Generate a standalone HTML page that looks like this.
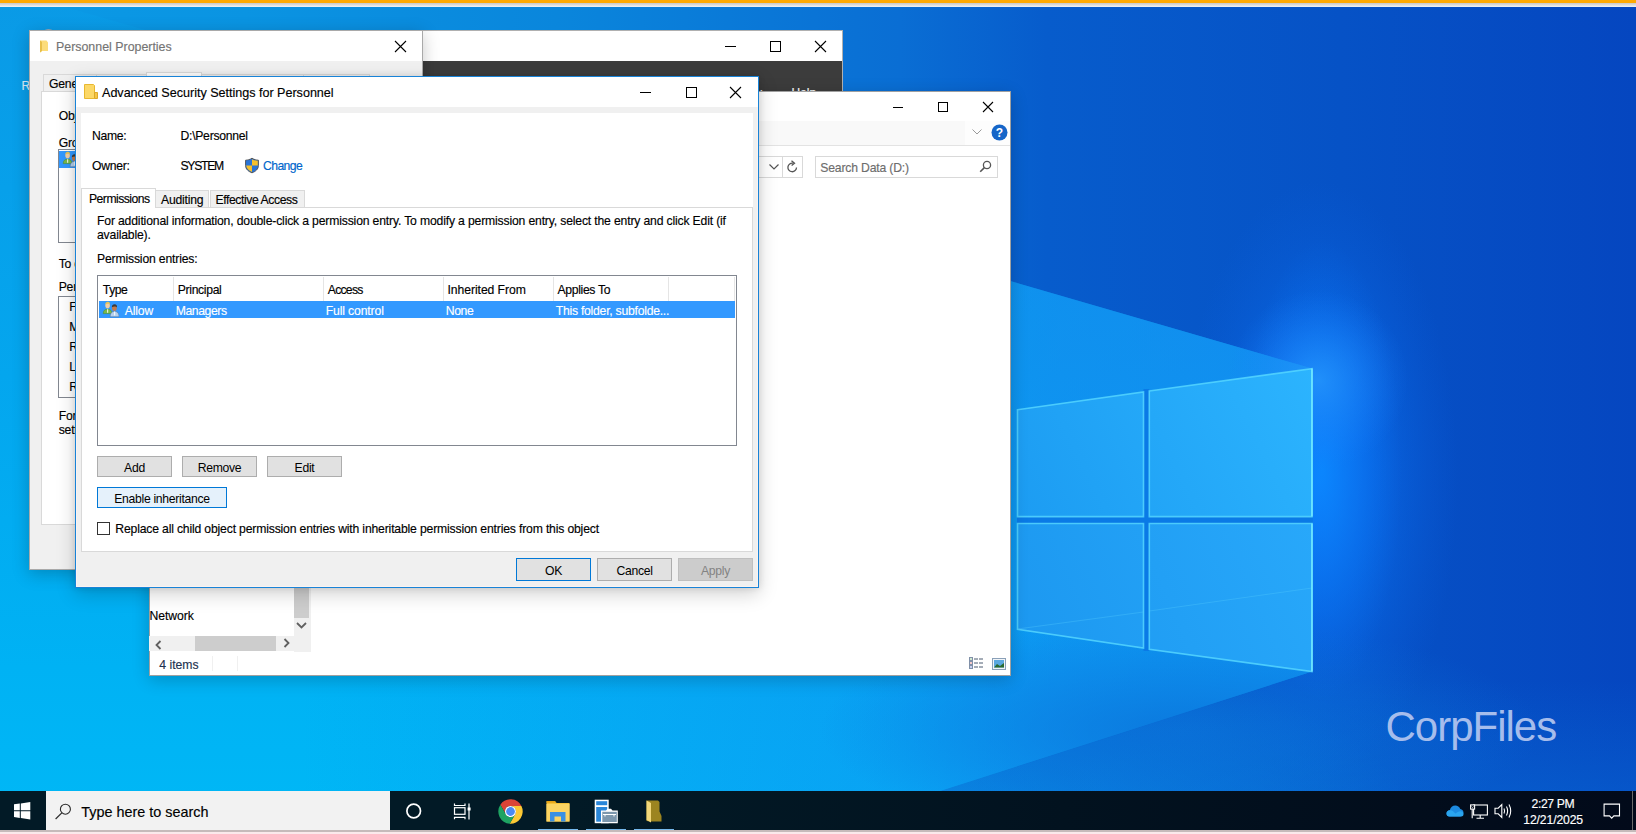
<!DOCTYPE html>
<html><head><meta charset="utf-8">
<style>
*{margin:0;padding:0;box-sizing:border-box}
html,body{width:1636px;height:834px;overflow:hidden;position:relative;background:#0a78d8;font-family:"Liberation Sans",sans-serif;color:#000}
.a{position:absolute}
.t{position:absolute;white-space:nowrap;line-height:1;-webkit-text-stroke:0.15px currentColor}
.win{position:absolute;background:#f0f0f0}
.btn{position:absolute;background:#e1e1e1;border:1px solid #adadad;font-size:12.2px;letter-spacing:-0.3px;display:flex;align-items:center;justify-content:center;white-space:nowrap;line-height:1;padding-top:3px}
</style></head><body>

<!-- desktop wallpaper -->
<svg class="a" style="left:0;top:0" width="1636" height="834" viewBox="0 0 1636 834">
<defs>
<linearGradient id="bg" x1="0" y1="0" x2="1636" y2="0" gradientUnits="userSpaceOnUse">
<stop offset="0" stop-color="#0a9ae6"/>
<stop offset="0.15" stop-color="#0a94e2"/>
<stop offset="0.34" stop-color="#0a86dc"/>
<stop offset="0.55" stop-color="#0a6ed4"/>
<stop offset="0.64" stop-color="#075ccc"/>
<stop offset="0.82" stop-color="#0652c6"/>
<stop offset="1" stop-color="#0546c0"/>
</linearGradient>
<linearGradient id="beam" x1="0" y1="0" x2="0" y2="834" gradientUnits="userSpaceOnUse">
<stop offset="0" stop-color="#0a9ae6"/>
<stop offset="0.45" stop-color="#04a6ee"/>
<stop offset="0.8" stop-color="#00b2f4"/>
<stop offset="1" stop-color="#00b8f6"/>
</linearGradient>
<linearGradient id="beamR" x1="300" y1="0" x2="1314" y2="0" gradientUnits="userSpaceOnUse">
<stop offset="0" stop-color="#1a7ef0" stop-opacity="0"/>
<stop offset="0.6" stop-color="#1a7ef0" stop-opacity="0.35"/>
<stop offset="0.75" stop-color="#1a7ef0" stop-opacity="0.5"/>
<stop offset="1" stop-color="#1a7ef0" stop-opacity="0.6"/>
</linearGradient>
<radialGradient id="glow" cx="0.5" cy="0.5" r="0.5">
<stop offset="0" stop-color="#1284ff" stop-opacity="0.9"/>
<stop offset="0.45" stop-color="#0a70f0" stop-opacity="0.55"/>
<stop offset="1" stop-color="#0a60e0" stop-opacity="0"/>
</radialGradient>
<radialGradient id="glow2" cx="1318" cy="380" r="90" gradientUnits="userSpaceOnUse">
<stop offset="0" stop-color="#2a9cff" stop-opacity="0.7"/>
<stop offset="1" stop-color="#1a80ff" stop-opacity="0"/>
</radialGradient>
<radialGradient id="glow3" cx="0.5" cy="0.5" r="0.5">
<stop offset="0" stop-color="#0a88ff" stop-opacity="0.8"/>
<stop offset="0.6" stop-color="#0a78f8" stop-opacity="0.35"/>
<stop offset="1" stop-color="#0a70f0" stop-opacity="0"/>
</radialGradient>
<radialGradient id="glowB" cx="0.5" cy="0.5" r="0.5">
<stop offset="0" stop-color="#0a96ea" stop-opacity="0.85"/>
<stop offset="1" stop-color="#0a90e6" stop-opacity="0"/>
</radialGradient>
<radialGradient id="under" cx="0.5" cy="0.5" r="0.5">
<stop offset="0" stop-color="#0a70d8" stop-opacity="0.75"/>
<stop offset="1" stop-color="#0a70d8" stop-opacity="0"/>
</radialGradient>
<linearGradient id="glowB2" x1="0" y1="680" x2="0" y2="834" gradientUnits="userSpaceOnUse">
<stop offset="0" stop-color="#0a84e4" stop-opacity="0"/>
<stop offset="1" stop-color="#0a84e4" stop-opacity="0.35"/>
</linearGradient>
<linearGradient id="paneT" x1="1017" y1="517" x2="1314" y2="368" gradientUnits="userSpaceOnUse">
<stop offset="0" stop-color="#1c9cf2"/>
<stop offset="1" stop-color="#2cb4fe"/>
</linearGradient>
<linearGradient id="paneB" x1="1017" y1="650" x2="1314" y2="523" gradientUnits="userSpaceOnUse">
<stop offset="0" stop-color="#1c98f0"/>
<stop offset="1" stop-color="#28a8fa"/>
</linearGradient>
</defs>
<rect x="0" y="0" width="1636" height="834" fill="url(#bg)"/>
<ellipse cx="1318" cy="480" rx="140" ry="300" fill="url(#glow)"/>
<ellipse cx="950" cy="840" rx="470" ry="200" fill="url(#glowB)"/>
<ellipse cx="1322" cy="470" rx="80" ry="230" fill="url(#glow3)"/>
<polygon points="1312,368.6 -200,-70 -200,900 600,900 1312,671.6" fill="url(#beam)"/>
<polygon points="1312,368.6 -200,-70 -200,900 600,900 1312,671.6" fill="url(#beamR)"/>
<ellipse cx="1180" cy="730" rx="360" ry="110" fill="url(#under)"/>
<polygon points="1314,672 1636,560 1636,834 600,900" fill="url(#glowB2)"/>
<rect x="1143.5" y="389" width="5.8" height="262" fill="#0a7ae6"/><rect x="1017" y="516.6" width="296" height="6.9" fill="#0a7ae6"/>
<rect x="1150" y="250" width="340" height="300" fill="url(#glow2)"/>
<!-- logo panes -->
<g stroke="#58d8ff" stroke-width="1.6" stroke-opacity="0.8">
<polygon points="1017.5,409.7 1143.5,391.9 1143.5,516.6 1017.5,516.6" fill="url(#paneT)"/>
<polygon points="1149.3,391 1312,368.6 1312,516.6 1149.3,516.6" fill="url(#paneT)"/>
<polygon points="1017.5,523.5 1143.5,523.5 1143.5,648 1017.5,629.4" fill="url(#paneB)"/>
<polygon points="1149.3,523.5 1312,523.5 1312,671.6 1149.3,649.4" fill="url(#paneB)"/>
</g>
<path d="M1017.5 629L1143.5 612M1149.3 611L1312 588" stroke="#5ad0ff" stroke-opacity="0.3" stroke-width="1"/>
<path d="M1312 368.6V516.6M1312 523.5V671.6" stroke="#7af0ff" stroke-width="2" stroke-opacity="0.65"/>
</svg>

<!-- top bar -->
<div class="a" style="left:0;top:0;width:1636px;height:3px;background:#ffa902"></div>
<div class="a" style="left:0;top:3px;width:1636px;height:4px;background:linear-gradient(#c8c8c8,#f4f4f4)"></div>

<!-- CorpFiles -->
<div class="t" style="left:1385.5px;top:706.4px;font-size:42px;letter-spacing:-1px;color:#a6bdec;-webkit-text-stroke:0">CorpFiles</div>
<div class="t" style="left:21.5px;top:80px;font-size:12px;color:#d8ecfc">R</div>
<div class="a" style="left:45px;top:28.5px;width:7px;height:3px;border-radius:50%;background:#9aa6b2"></div>

<!-- dark back window -->
<div class="win" id="backwin" style="left:422px;top:30px;width:421px;height:120px;background:#fff;box-shadow:0 0 0 1px #b0b0b0 inset">
<div class="a" style="left:0;top:31px;width:420px;height:89px;background:#3c3c3c"></div>
<div class="a" style="left:303px;top:16px;width:11px;height:1px;background:#000"></div>
<div class="a" style="left:348px;top:11px;width:11px;height:11px;border:1px solid #000"></div>
<svg class="a" style="left:392px;top:10px" width="13" height="13" viewBox="0 0 13 13"><path d="M1 1L12 12M12 1L1 12" stroke="#000" stroke-width="1.1"/></svg>
<div class="t" style="left:314px;top:57px;font-size:12px;color:#fff">View</div><div class="t" style="left:369.5px;top:57px;font-size:12px;color:#fff">Help</div>
</div>


<!-- Personnel Properties -->
<div class="win" id="pp" style="left:29px;top:30px;width:394px;height:540px;background:#f0f0f0;box-shadow:0 0 0 1px #a9a9a9 inset, 0 4px 16px rgba(0,0,0,0.22)">
<div class="a" style="left:1px;top:1px;width:392px;height:30px;background:#fff"></div>
<svg class="a" style="left:10px;top:10px" width="10" height="13" viewBox="0 0 10 13"><path d="M1 0.5h6.5l1.5 2v8.5H3l-2 1.5z" fill="#fcdc7a"/><path d="M1 0.5v12l2-1.5V2z" fill="#e8bf4a"/></svg>
<div class="t" style="left:27px;top:10.6px;font-size:12.4px;color:#747474">Personnel Properties</div>
<svg class="a" style="left:365px;top:10px" width="13" height="13" viewBox="0 0 13 13"><path d="M1 1L12 12M12 1L1 12" stroke="#000" stroke-width="1.1"/></svg>
<!-- tabs -->
<div class="a" style="left:14px;top:44px;width:54px;height:18px;border:1px solid #d9d9d9;border-bottom:none;background:#f0f0f0"></div>
<div class="a" style="left:67px;top:44px;width:51px;height:18px;border:1px solid #d9d9d9;border-bottom:none;background:#f0f0f0"></div>
<div class="a" style="left:117px;top:42px;width:56px;height:20px;border:1px solid #d9d9d9;border-bottom:none;background:#fff"></div>
<div class="a" style="left:172px;top:44px;width:103px;height:18px;border:1px solid #d9d9d9;border-bottom:none;background:#f0f0f0"></div>
<div class="a" style="left:274px;top:44px;width:67px;height:18px;border:1px solid #d9d9d9;border-bottom:none;background:#f0f0f0"></div>
<div class="t" style="left:20px;top:48px;font-size:12.2px;letter-spacing:-0.2px">General</div>
<div class="a" style="left:12px;top:61px;width:369px;height:434px;background:#fff;border:1px solid #d9d9d9"></div>
<div class="t" style="left:29.7px;top:80px;font-size:12.2px;letter-spacing:-0.2px">Object name:</div>
<div class="t" style="left:29.7px;top:107px;font-size:12.2px;letter-spacing:-0.2px">Group or user names:</div>
<div class="a" style="left:29px;top:119px;width:336px;height:94px;border:1px solid #828790;background:#fff"></div>
<div class="a" style="left:30px;top:121px;width:200px;height:17px;background:#3399ff"></div>
<svg class="a" style="left:33px;top:121px" width="17" height="17" viewBox="0 0 17 17"><path d="M1.2 12.6C1.2 9.6 3 8.1 5.6 8.1S10 9.6 10 12.6z" fill="#78b848" stroke="#4a8a2a" stroke-width=".5"/><path d="M5 8.3h1.2v3.5H5z" fill="#e8f0e0"/><ellipse cx="5.6" cy="4.6" rx="2.3" ry="2.8" fill="#f2cfa6"/><path d="M3.2 3.6C3.4 1.6 4.6 0.6 6 0.8 7.4 1 8.2 2 8 3.4 7 2.6 5 2.6 3.2 3.6z" fill="#e6c45a"/><path d="M8.2 15.8C8.2 12 10 10.4 12.6 10.4S17 12 17 15.8z" fill="#b4d0ec" stroke="#5a7aa0" stroke-width=".6"/><path d="M12 10.6h1.2v4H12z" fill="#f0f4fa"/><ellipse cx="12.4" cy="6.9" rx="2.4" ry="2.9" fill="#c47a4a"/><path d="M9.8 6.2C9.8 4.2 11 3.2 12.6 3.2 14.2 3.2 15.2 4.4 15 6.4 14.2 5.2 11.4 5 9.8 6.2z" fill="#3a3a3a"/></svg>
<div class="t" style="left:29.7px;top:228px;font-size:12.2px;letter-spacing:-0.2px">To change permissions, click Edit.</div>
<div class="t" style="left:29.7px;top:251px;font-size:12.2px;letter-spacing:-0.2px">Permissions for Managers</div>
<div class="a" style="left:29px;top:266px;width:336px;height:102px;border:1px solid #828790;background:#fff"></div>
<div class="t" style="left:40.3px;top:271px;font-size:12.2px;letter-spacing:-0.2px">Full control</div>
<div class="t" style="left:40.3px;top:291px;font-size:12.2px;letter-spacing:-0.2px">Modify</div>
<div class="t" style="left:40.3px;top:311px;font-size:12.2px;letter-spacing:-0.2px">Read &amp; execute</div>
<div class="t" style="left:40.3px;top:331px;font-size:12.2px;letter-spacing:-0.2px">List folder contents</div>
<div class="t" style="left:40.3px;top:351px;font-size:12.2px;letter-spacing:-0.2px">Read</div>
<div class="t" style="left:29.7px;top:380px;font-size:12.2px;letter-spacing:-0.2px">For special permissions or advanced settings,</div>
<div class="t" style="left:29.7px;top:394px;font-size:12.2px;letter-spacing:-0.2px">settings, click Advanced.</div>
</div>


<!-- Explorer -->
<div class="win" id="ex" style="left:149px;top:91px;width:862px;height:585px;background:#fff;box-shadow:0 0 0 1px #a0a0a0 inset, 0 4px 16px rgba(0,0,0,0.2)">
<div class="a" style="left:1px;top:30px;width:860px;height:25px;background:#f9f9f9;border-bottom:1px solid #e3e3e3"></div>
<div class="a" style="left:816px;top:30px;width:45px;height:24px;background:#fdfdfd"></div>
<div class="a" style="left:744px;top:16px;width:10px;height:1px;background:#000"></div>
<div class="a" style="left:789px;top:11px;width:10px;height:10px;border:1px solid #000"></div>
<svg class="a" style="left:833px;top:10px" width="12" height="12" viewBox="0 0 12 12"><path d="M1 1L11 11M11 1L1 11" stroke="#000" stroke-width="1.1"/></svg>
<svg class="a" style="left:823px;top:38px" width="10" height="6" viewBox="0 0 10 6"><path d="M0.5 0.5L5 5 9.5 0.5" stroke="#9a9a9a" fill="none" stroke-width="1"/></svg>
<svg class="a" style="left:842px;top:33px" width="17" height="17" viewBox="0 0 17 17"><circle cx="8.5" cy="8.5" r="8" fill="#1565c8"/><text x="8.5" y="13" font-size="12" font-weight="bold" text-anchor="middle" fill="#fff" font-family="Liberation Sans">?</text></svg>
<!-- address row -->
<div class="a" style="left:500px;top:65px;width:154px;height:22px;border:1px solid #d9d9d9;border-left:none"></div>
<div class="a" style="left:633px;top:65px;width:1px;height:22px;background:#d9d9d9"></div>
<svg class="a" style="left:620px;top:73px" width="10" height="6" viewBox="0 0 10 6"><path d="M0.5 0.5L5 5 9.5 0.5" stroke="#555" fill="none" stroke-width="1.2"/></svg>
<svg class="a" style="left:637px;top:69px" width="13" height="14" viewBox="0 0 13 14"><path d="M10.5 7.5A4.3 4.3 0 1 1 7 3.2" stroke="#555" fill="none" stroke-width="1.3"/><path d="M5.5 0.8L8.5 3.2 5.6 5.6" stroke="#555" fill="none" stroke-width="1.3"/></svg>
<div class="a" style="left:666px;top:65px;width:183px;height:22px;border:1px solid #d9d9d9;background:#fff"></div>
<div class="t" style="left:671.3px;top:71px;font-size:12.2px;letter-spacing:-0.18px;color:#6d6d6d">Search Data (D:)</div>
<svg class="a" style="left:830px;top:69px" width="13" height="13" viewBox="0 0 13 13"><circle cx="8" cy="5" r="3.6" stroke="#555" fill="none" stroke-width="1.3"/><path d="M5.4 7.6L1.2 11.8" stroke="#555" stroke-width="1.6"/></svg>
<!-- nav pane -->
<div class="a" style="left:145px;top:95px;width:17px;height:466px;background:#f0f0f0"></div>
<div class="a" style="left:145px;top:95px;width:15px;height:432px;background:#cdcdcd"></div>
<svg class="a" style="left:147px;top:531px" width="11" height="7" viewBox="0 0 11 7"><path d="M1 1L5.5 5.5 10 1" stroke="#606060" fill="none" stroke-width="1.8"/></svg>
<div class="a" style="left:0;top:545px;width:162px;height:15px;background:#f0f0f0"></div>
<div class="a" style="left:46px;top:545px;width:81px;height:15px;background:#cdcdcd"></div>
<svg class="a" style="left:6px;top:549px" width="7" height="10" viewBox="0 0 7 10"><path d="M5.5 1L1.5 5 5.5 9" stroke="#606060" fill="none" stroke-width="1.8"/></svg>
<svg class="a" style="left:134px;top:547px" width="7" height="10" viewBox="0 0 7 10"><path d="M1.5 1L5.5 5 1.5 9" stroke="#606060" fill="none" stroke-width="1.8"/></svg>
<div class="t" style="left:0.6px;top:519px;font-size:12.2px;letter-spacing:-0.07px">Network</div>
<!-- status bar -->
<div class="t" style="left:10.3px;top:568px;font-size:12.2px;letter-spacing:-0.01px;color:#1e3250">4 items</div>
<div class="a" style="left:63px;top:565px;width:1px;height:15px;background:#f0f0f0"></div>
<div class="a" style="left:88px;top:565px;width:1px;height:15px;background:#f0f0f0"></div>
<svg class="a" style="left:820px;top:566px" width="16" height="13" viewBox="0 0 16 13"><g fill="#fff" stroke="#8090a8" stroke-width="1"><rect x="0.5" y="0.5" width="3" height="3"/><rect x="0.5" y="4.5" width="3" height="3"/><rect x="0.5" y="8.5" width="3" height="3"/></g><rect x="1.5" y="1.5" width="1" height="1" fill="#40a040"/><rect x="1.5" y="5.5" width="1" height="1" fill="#e03030"/><rect x="1.5" y="9.5" width="1" height="1" fill="#3050d0"/><g stroke="#4a5a70" stroke-width="1"><path d="M5 2h4M10 2h4M5 6h4M10 6h4M5 10h4M10 10h4"/></g></svg>
<svg class="a" style="left:843px;top:567px" width="14" height="12" viewBox="0 0 14 12"><rect x="0.5" y="0.5" width="13" height="11" fill="#f0f4f8" stroke="#8aa0b8"/><rect x="2" y="2" width="10" height="7.5" fill="#5aa8e0"/><path d="M2 9.5l3-3.5 3 2 4-3v4.5z" fill="#2a6a30"/></svg>
</div>


<!-- Advanced Security Settings -->
<div class="win" id="adv" style="left:75px;top:76px;width:684px;height:512px;background:#f0f0f0;box-shadow:0 0 0 1px #1883d7 inset, 0 6px 18px rgba(0,0,0,0.18), 0 0 7px rgba(0,0,0,0.11)">
<div class="a" style="left:1px;top:1px;width:682px;height:510px;border:1px solid #fbf3f0;border-top:none"></div>
<div class="a" style="left:1px;top:1px;width:682px;height:30px;background:#fff"></div>
<!-- title icon -->
<svg class="a" style="left:8px;top:7px" width="16" height="17" viewBox="0 0 16 17"><path d="M1.5 1.5h9l1 1v13h-10z" fill="#fcd867" stroke="#e8b830" stroke-width="1"/><path d="M11.5 9.5h3v6h-3z" fill="#f6c544" stroke="#dca82a"/></svg>
<div class="t" style="left:27px;top:11px;font-size:12.6px;letter-spacing:-0.02px">Advanced Security Settings for Personnel</div>
<div class="a" style="left:565px;top:16px;width:11px;height:1px;background:#000"></div>
<div class="a" style="left:611px;top:11px;width:11px;height:11px;border:1px solid #000"></div>
<svg class="a" style="left:654px;top:10px" width="13" height="13" viewBox="0 0 13 13"><path d="M1 1L12 12M12 1L1 12" stroke="#000" stroke-width="1.1"/></svg>
<!-- white panel -->
<div class="a" style="left:6px;top:37px;width:672px;height:438px;background:#fff"></div>
<div class="t" style="left:17px;top:54px;font-size:12.2px;letter-spacing:-0.3px">Name:</div>
<div class="t" style="left:105.5px;top:54px;font-size:12.2px;letter-spacing:-0.27px">D:\Personnel</div>
<div class="t" style="left:17px;top:84px;font-size:12.2px;letter-spacing:-0.3px">Owner:</div>
<div class="t" style="left:105.5px;top:84px;font-size:12.2px;letter-spacing:-1.3px">SYSTEM</div>
<svg class="a" style="left:169px;top:81px" width="16" height="17" viewBox="0 0 16 17"><path d="M8 1.2C5.8 2.6 3.6 3.2 1.6 3.2v5.4c0 3.4 2.6 5.8 6.4 7.2 3.8-1.4 6.4-3.8 6.4-7.2V3.2C12.4 3.2 10.2 2.6 8 1.2z" fill="#2a6fcb" stroke="#4a4a4a" stroke-width="0.9"/><path d="M8 2v6.5H2.2V3.6C4.4 3.5 6.2 3 8 2z" fill="#2a74d6"/><path d="M8 8.5h5.8c-.2 3-2.5 5.2-5.8 6.4z" fill="#2a74d6"/><path d="M8 2.2c1.8 1 3.6 1.5 5.8 1.6v4.7H8z" fill="#f6c02a"/><path d="M2.2 8.5H8v6.4C4.7 13.7 2.4 11.5 2.2 8.5z" fill="#f6c02a"/></svg>
<div class="t" style="left:188px;top:84px;font-size:12.2px;letter-spacing:-0.6px;color:#0066cc">Change</div>
<!-- tabs -->
<div class="a" style="left:80.7px;top:114px;width:54px;height:17px;background:#f0f0f0;border:1px solid #d9d9d9;border-bottom:none;left:80px"></div>
<div class="a" style="left:135px;top:114px;width:95px;height:17px;background:#f0f0f0;border:1px solid #d9d9d9;border-bottom:none"></div>
<div class="a" style="left:6px;top:112px;width:75px;height:20px;background:#fff;border:1px solid #d9d9d9;border-bottom:none;z-index:2"></div>
<div class="a" style="left:6px;top:131px;width:672px;height:345px;border:1px solid #d9d9d9"></div>
<div class="t" style="left:14px;top:117px;font-size:12.2px;letter-spacing:-0.52px;z-index:3">Permissions</div>
<div class="t" style="left:86px;top:118px;font-size:12.2px;letter-spacing:-0.2px">Auditing</div>
<div class="t" style="left:140.6px;top:118px;font-size:12.2px;letter-spacing:-0.42px">Effective Access</div>
<div class="t" style="left:22px;top:139px;font-size:12.2px;letter-spacing:-0.165px">For additional information, double-click a permission entry. To modify a permission entry, select the entry and click Edit (if</div>
<div class="t" style="left:22px;top:153px;font-size:12.2px;letter-spacing:-0.165px">available).</div>
<div class="t" style="left:22px;top:177px;font-size:12.2px;letter-spacing:-0.165px">Permission entries:</div>
<!-- list -->
<div class="a" style="left:22px;top:199px;width:640px;height:171px;border:1px solid #828790;background:#fff"></div>
<div class="a" style="left:98px;top:201px;width:1px;height:24px;background:#e5e5e5"></div>
<div class="a" style="left:248px;top:201px;width:1px;height:24px;background:#e5e5e5"></div>
<div class="a" style="left:368px;top:201px;width:1px;height:24px;background:#e5e5e5"></div>
<div class="a" style="left:478px;top:201px;width:1px;height:24px;background:#e5e5e5"></div>
<div class="a" style="left:593px;top:201px;width:1px;height:24px;background:#e5e5e5"></div>
<div class="a" style="left:659px;top:201px;width:1px;height:24px;background:#e5e5e5"></div>
<div class="t" style="left:27.8px;top:208px;font-size:12.2px;letter-spacing:-0.44px">Type</div>
<div class="t" style="left:102.8px;top:208px;font-size:12.2px;letter-spacing:-0.34px">Principal</div>
<div class="t" style="left:252.8px;top:208px;font-size:12.2px;letter-spacing:-0.75px">Access</div>
<div class="t" style="left:372.5px;top:208px;font-size:12.2px;letter-spacing:-0.07px">Inherited From</div>
<div class="t" style="left:482.5px;top:208px;font-size:12.2px;letter-spacing:-0.34px">Applies To</div>
<div class="a" style="left:24px;top:225px;width:636px;height:17px;background:#3399ff"></div>
<svg class="a" style="left:27px;top:225px" width="17" height="17" viewBox="0 0 17 17"><path d="M1.2 12.6C1.2 9.6 3 8.1 5.6 8.1S10 9.6 10 12.6z" fill="#78b848" stroke="#4a8a2a" stroke-width=".5"/><path d="M5 8.3h1.2v3.5H5z" fill="#e8f0e0"/><ellipse cx="5.6" cy="4.6" rx="2.3" ry="2.8" fill="#f2cfa6"/><path d="M3.2 3.6C3.4 1.6 4.6 0.6 6 0.8 7.4 1 8.2 2 8 3.4 7 2.6 5 2.6 3.2 3.6z" fill="#e6c45a"/><path d="M8.2 15.8C8.2 12 10 10.4 12.6 10.4S17 12 17 15.8z" fill="#b4d0ec" stroke="#5a7aa0" stroke-width=".6"/><path d="M12 10.6h1.2v4H12z" fill="#f0f4fa"/><ellipse cx="12.4" cy="6.9" rx="2.4" ry="2.9" fill="#c47a4a"/><path d="M9.8 6.2C9.8 4.2 11 3.2 12.6 3.2 14.2 3.2 15.2 4.4 15 6.4 14.2 5.2 11.4 5 9.8 6.2z" fill="#3a3a3a"/></svg>
<div class="t" style="left:49.8px;top:229px;font-size:12.2px;letter-spacing:-0.18px;color:#fff">Allow</div>
<div class="t" style="left:100.7px;top:229px;font-size:12.2px;letter-spacing:-0.41px;color:#fff">Managers</div>
<div class="t" style="left:250.8px;top:229px;font-size:12.2px;letter-spacing:-0.14px;color:#fff">Full control</div>
<div class="t" style="left:370.7px;top:229px;font-size:12.2px;letter-spacing:-0.34px;color:#fff">None</div>
<div class="t" style="left:480.7px;top:229px;font-size:12.2px;letter-spacing:-0.24px;color:#fff">This folder, subfolde...</div>
<!-- buttons -->
<div class="btn" style="left:22px;top:380px;width:75px;height:21px">Add</div>
<div class="btn" style="left:107px;top:380px;width:75px;height:21px">Remove</div>
<div class="btn" style="left:192px;top:380px;width:75px;height:21px">Edit</div>
<div class="btn" style="left:22px;top:411px;width:130px;height:21px;background:#e5f1fb;border-color:#0078d7">Enable inheritance</div>
<div class="a" style="left:22px;top:446px;width:13px;height:13px;border:1px solid #333;background:#fff"></div>
<div class="t" style="left:40.3px;top:446.9px;font-size:12.2px;letter-spacing:-0.17px">Replace all child object permission entries with inheritable permission entries from this object</div>
<div class="btn" style="left:441px;top:482px;width:75px;height:23px;border-color:#0078d7">OK</div>
<div class="btn" style="left:522px;top:482px;width:75px;height:23px">Cancel</div>
<div class="btn" style="left:603px;top:482px;width:75px;height:23px;background:#cccccc;border-color:#bfbfbf;color:#838383">Apply</div>
</div>


<!-- taskbar -->
<div class="a" id="tb" style="left:0;top:791px;width:1636px;height:39px;background:linear-gradient(90deg,#021a26 0%,#021a26 35%,#02121f 65%,#020a1a 100%)">
<svg class="a" style="left:13px;top:11px" width="18" height="18" viewBox="0 0 18 18"><path d="M1 2.3L6.8 1.5V8.2H1z M7.8 1.4L17.3 0.1V8.2H7.8z M1 9.2H6.8V15.9L1 15.1z M7.8 9.2H17.3V17.4L7.8 16.1z" fill="#fff"/></svg>
<div class="a" style="left:46px;top:0;width:344px;height:39px;background:#f2f2f2"></div>
<svg class="a" style="left:54px;top:10px" width="18" height="20" viewBox="0 0 18 20"><circle cx="11.4" cy="8.2" r="5" stroke="#2a2a2a" fill="none" stroke-width="1.1"/><path d="M7.8 11.8L1.6 18" stroke="#2a2a2a" stroke-width="1.2"/></svg>
<div class="t" style="left:81.3px;top:804.4px;font-size:14.4px;color:#000;top:13.6px">Type here to search</div>
<svg class="a" style="left:405px;top:11px" width="18" height="18" viewBox="0 0 18 18"><circle cx="8.7" cy="9" r="6.8" stroke="#fff" fill="none" stroke-width="1.7"/></svg>
<svg class="a" style="left:453px;top:12px" width="18" height="17" viewBox="0 0 18 17"><g stroke="#fff" stroke-width="1.2" fill="none"><path d="M1.5 0.5v2h10.5v-2"/><rect x="1.5" y="4.7" width="10.5" height="6.6"/><path d="M1.5 16.3v-2h10.5v2"/><path d="M16 0.5v16"/></g><rect x="14.6" y="4.5" width="3" height="3" fill="#fff"/></svg>
<svg class="a" style="left:498px;top:8px" width="25" height="25" viewBox="-12.5 -12.5 25 25"><path d="M-10.15 -6.77A12.2 12.2 0 0 1 10.94 -5.4L0 -5.4A5.4 5.4 0 0 0 -4.68 2.7z" fill="#db4437"/><path d="M10.94 -5.4A12.2 12.2 0 0 1 -0.79 12.17L4.68 2.7A5.4 5.4 0 0 0 0 -5.4z" fill="#fcc934"/><path d="M-0.79 12.17A12.2 12.2 0 0 1 -10.15 -6.77L-4.68 2.7A5.4 5.4 0 0 0 4.68 2.7z" fill="#1ea362"/><circle r="5.5" fill="#fff"/><circle r="4.4" fill="#4a8af4"/></svg>
<svg class="a" style="left:546px;top:9px" width="24" height="22" viewBox="0 0 24 22"><path d="M0.5 1.5h8.5l1.5 1.5h13v18.5h-23z" fill="#f5c23a"/><path d="M0.5 1h8.5l1.5 1.8h-10z" fill="#e6a214"/><path d="M0.5 4h23v17.5h-23z" fill="#fcd462"/><path d="M4 21.5v-9.5h15.5v9.5h-4.5v-5h-6.5v5z" fill="#3a90e2"/></svg>
<svg class="a" style="left:594px;top:8px" width="25" height="25" viewBox="0 0 25 25"><rect x="0.7" y="0.7" width="14" height="23.5" fill="#fff"/><rect x="2.2" y="2.2" width="11" height="4" fill="#2a86d8"/><rect x="2.2" y="8" width="11" height="14.7" fill="#2a86d8"/><path d="M7 11.5h5l1.5-1.8h3.5l1.5 1.8h5.3v12.8H7z" fill="#fff"/><rect x="8.3" y="12.8" width="14.5" height="10.2" fill="#7c97ad"/><path d="M9 15.5h13M11 15.5v2M20 15.5v2" stroke="#fff" stroke-width="1"/></svg>
<svg class="a" style="left:646px;top:9px" width="16" height="23" viewBox="0 0 16 23"><path d="M0.5 0.5h11.5l1.5 1.5v9.5l2 4.5v5.5H5L0.5 21z" fill="#9c8420"/><path d="M0.5 0.5L5 3v19.5L0.5 20z" fill="#f2d77a"/><path d="M5 3l7-2.5 1 1" fill="none"/></svg>
<div class="a" style="left:538px;top:38px;width:40px;height:1px;background:#76b9ed"></div>
<div class="a" style="left:586px;top:38px;width:40px;height:1px;background:#76b9ed"></div>
<div class="a" style="left:634px;top:38px;width:40px;height:1px;background:#76b9ed"></div>
<svg class="a" style="left:1446px;top:14px" width="18" height="12" viewBox="0 0 18 12"><path d="M3.5 11.5C1.5 11.5 0.5 10 0.5 8.4 0.5 6.6 2 5.3 3.8 5.3 4.4 2.4 6.6 0.5 9.3 0.5c2.3 0 4.2 1.4 5 3.4 1.9 0.2 3.2 1.7 3.2 3.6 0 2.2-1.6 4-3.8 4z" fill="#1c8ae0"/><path d="M3.5 11.5C1.5 11.5 0.5 10 0.5 8.4 0.5 6.8 1.8 5.4 3.6 5.3 6 5 8 7 9.5 8.5 11 7 13 6 15 6.2c1.6.3 2.5 1.6 2.5 3 0 1.3-1 2.3-2.3 2.3z" fill="#2aa4ee"/></svg>
<svg class="a" style="left:1470px;top:13px" width="18" height="15" viewBox="0 0 18 15"><g stroke="#fff" stroke-width="1.1" fill="none"><rect x="3.6" y="1" width="13.8" height="10"/><path d="M6.5 14.2h7.5M10.2 11v3.2M2.2 5v9.3"/></g><rect x="0.6" y="0.9" width="4" height="4.2" fill="#020c1c" stroke="#fff" stroke-width="1.1"/><path d="M1.6 2.5l1 1 1-1" stroke="#fff" stroke-width=".8" fill="none"/></svg>
<svg class="a" style="left:1494px;top:12px" width="18" height="16" viewBox="0 0 18 16"><g stroke="#fff" stroke-width="1.1" fill="none"><path d="M1 5.2h3.2L7.8 1.6v12.8L4.2 10.8H1z"/><path d="M10 5.5q1.2 2.5 0 5"/><path d="M12.5 3.5q2.2 4.5 0 9"/><path d="M15 1.5q3.4 6.5 0 13"/></g></svg>
<div class="t" style="left:1531.6px;top:7px;font-size:12.2px;letter-spacing:-0.4px;color:#fff">2:27 PM</div>
<div class="t" style="left:1523.3px;top:23px;font-size:12.2px;letter-spacing:-0.13px;color:#fff">12/21/2025</div>
<svg class="a" style="left:1603px;top:12px" width="18" height="17" viewBox="0 0 18 17"><path d="M1.1 1.1h15.4v11.8h-5.6l-2.2 2.3-2.2-2.3H1.1z" stroke="#fff" stroke-width="1.1" fill="none"/></svg>
<div class="a" style="left:1632px;top:0;width:1px;height:39px;background:#6a6a6a"></div>
</div>

<div class="a" style="left:0;top:830px;width:1636px;height:4px;background:linear-gradient(#c6baba 0,#c6baba 1.5px,#e8d8d8 2px,#fbe9eb 2.5px,#fbe9eb 4px)"></div>

</body></html>
